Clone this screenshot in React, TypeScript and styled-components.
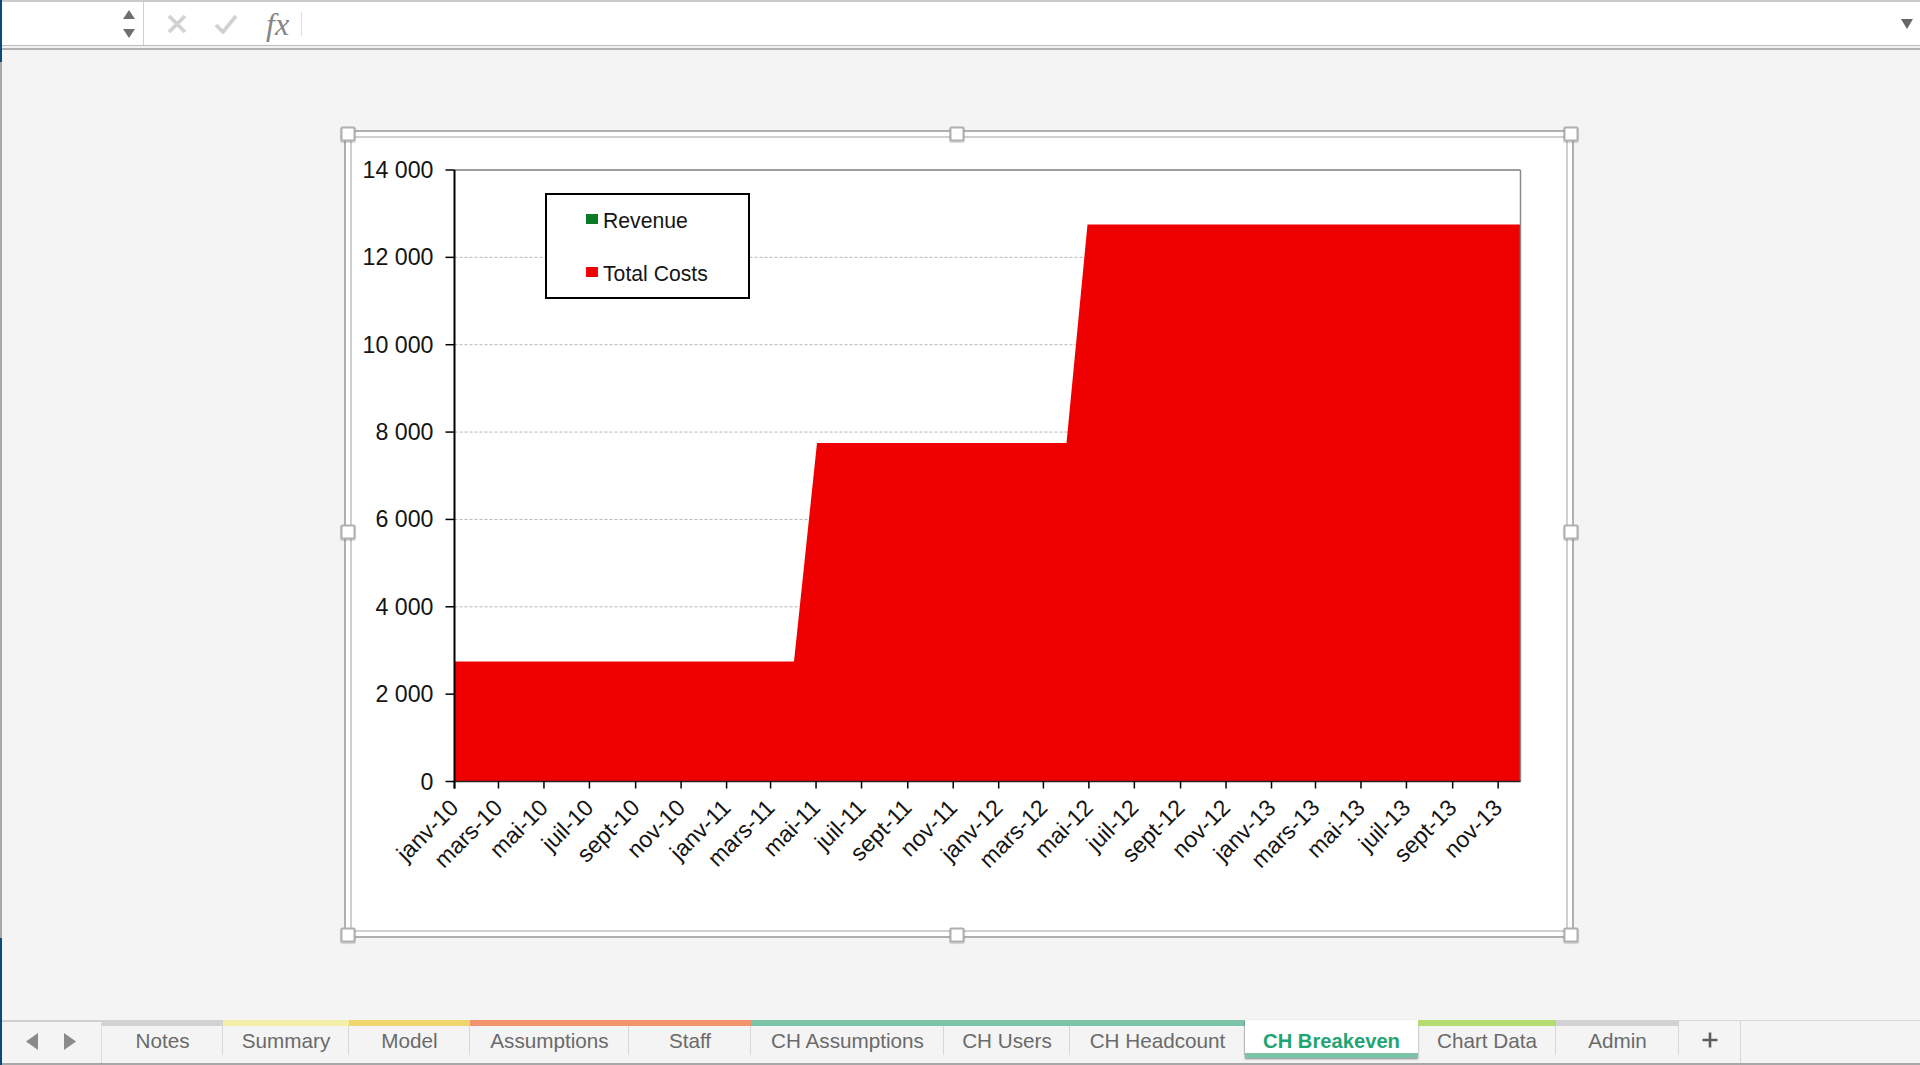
import React from 'react'
import styled, { createGlobalStyle } from 'styled-components'

/* chart scale, in page pixels because the svg viewBox starts at the frame's inner corner */
const PLOT = { left: 454.5, right: 1520.5, top: 170, bottom: 781.5 }
const Y_STEP = (PLOT.bottom - PLOT.top) / 14000
const AXIS_DAYS = 1430

const MONTHS = [
  { name: 'janv', index: 0 },
  { name: 'mars', index: 2 },
  { name: 'mai', index: 4 },
  { name: 'juil', index: 6 },
  { name: 'sept', index: 8 },
  { name: 'nov', index: 10 },
]

const xTicks = [2010, 2011, 2012, 2013].flatMap((year) =>
  MONTHS.map((m) => {
    const days = (Date.UTC(year, m.index, 1) - Date.UTC(2010, 0, 1)) / 86400000
    return {
      label: `${m.name}-${String(year).slice(2)}`,
      x: PLOT.left + (days / AXIS_DAYS) * (PLOT.right - PLOT.left),
    }
  })
)

const yTicks = [0, 2000, 4000, 6000, 8000, 10000, 12000, 14000]

const yOf = (v: number): number => PLOT.bottom - v * Y_STEP
const formatY = (v: number): string => (v === 0 ? '0' : `${v / 1000} 000`)

const costArea = [
  [PLOT.left, yOf(0)],
  [PLOT.left, yOf(2750)],
  [794, yOf(2750)],
  [817, yOf(7750)],
  [1066.5, yOf(7750)],
  [1087.5, yOf(12750)],
  [PLOT.right, yOf(12750)],
  [PLOT.right, yOf(0)],
]
  .map((p) => p.join(','))
  .join(' ')

const TABS = [
  { label: 'Notes', width: 121, color: '#d2d2d2' },
  { label: 'Summary', width: 126, color: '#f3efa6' },
  { label: 'Model', width: 121, color: '#efd56e' },
  { label: 'Assumptions', width: 159, color: '#f2956e' },
  { label: 'Staff', width: 122, color: '#f2956e' },
  { label: 'CH Assumptions', width: 193, color: '#7cc3a7' },
  { label: 'CH Users', width: 126, color: '#7cc3a7' },
  { label: 'CH Headcount', width: 175, color: '#7cc3a7' },
  { label: 'CH Breakeven', width: 173, color: '#7cc3a7', active: true },
  { label: 'Chart Data', width: 138, color: '#b5dc6e' },
  { label: 'Admin', width: 123, color: '#d2d2d2' },
]

const HANDLES = [
  { x: 0, y: 0 },
  { x: 49.8, y: 0 },
  { x: 100, y: 0 },
  { x: 0, y: 49.8 },
  { x: 100, y: 49.8 },
  { x: 0, y: 100 },
  { x: 49.8, y: 100 },
  { x: 100, y: 100 },
]

const GlobalStyle = createGlobalStyle`
  html, body {
    margin: 0;
    padding: 0;
    background: #f4f4f4;
    font-family: "Liberation Sans", Arial, sans-serif;
  }
`

const Window = styled.div`
  display: flex;
  width: 1920px;
  height: 1065px;
  overflow: hidden;
`

const EdgeStrip = styled.div`
  flex: 0 0 2px;
  background: linear-gradient(#0d4a78 62px, #a8a8a8 62px, #a8a8a8 938px, #0d4a78 938px);
`

const Main = styled.div`
  flex: 1;
  display: flex;
  flex-direction: column;
  min-width: 0;
`

const Toolbar = styled.div`
  display: flex;
  align-items: center;
  height: 46px;
  box-sizing: border-box;
  background: #fff;
  border-top: 2px solid #cbcbcb;
  border-bottom: 1.5px solid #bcbcbc;
`

const ToolbarRule = styled.div`
  height: 4px;
  box-sizing: border-box;
  background: #f2f2f2;
  border-bottom: 2px solid #b2b2b2;
`

const NameBox = styled.div`
  flex: 0 0 142px;
  box-sizing: border-box;
  align-self: stretch;
  display: flex;
  flex-direction: column;
  align-items: flex-end;
  justify-content: center;
  gap: 10px;
  padding-right: 8px;
  border-right: 1.5px solid #cfcfcf;
`

const ToolIcon = styled.svg`
  display: block;
  flex: none;
`

const FormulaActions = styled.div`
  display: flex;
  align-items: center;
  padding-left: 23px;
  gap: 27px;
`

const FxLabel = styled.span`
  margin-left: 1px;
  font-family: "Liberation Serif", "Times New Roman", serif;
  font-style: italic;
  font-size: 32px;
  line-height: 30px;
  color: #858585;
`

const FormulaDivider = styled.div`
  width: 1px;
  height: 24px;
  margin-left: -15px;
  background: #dcdcdc;
`

const FormulaInput = styled.div`
  flex: 1;
  display: flex;
  justify-content: flex-end;
  padding-right: 7px;
`

const SheetArea = styled.div`
  flex: 1;
  padding: 80px 0 0 342px;
  background: #f4f4f4;
`

const ChartFrame = styled.div`
  position: relative;
  box-sizing: border-box;
  width: 1230px;
  height: 808px;
  padding: 4px;
  background: #fff;
  border: 2px solid #b0b0b0;
`

const ChartInner = styled.div`
  position: relative;
  box-sizing: border-box;
  height: 100%;
  border: 2px solid #cfcfcf;
`

const ChartSvg = styled.svg`
  display: block;
  width: 100%;
  height: 100%;
`

const AxisLabel = styled.text`
  font-family: "Liberation Sans", Arial, sans-serif;
  font-size: 23.2px;
  fill: #141414;
`

const Legend = styled.div`
  position: absolute;
  left: 193px;
  top: 55px;
  box-sizing: border-box;
  width: 205px;
  height: 106px;
  display: flex;
  flex-direction: column;
  justify-content: center;
  gap: 29px;
  padding: 2px 0 0 39px;
  background: #fff;
  border: 2px solid #000;
`

const LegendRow = styled.div`
  display: flex;
  align-items: center;
  height: 24px;
  font-size: 21.2px;
  color: #151515;
`

const LegendSwatch = styled.span<{ $color: string }>`
  width: 12px;
  height: 10px;
  margin: -3px 5px 0 0;
  background: ${(p) => p.$color};
`

const HandleLayer = styled.div`
  position: absolute;
  inset: 1.5px;
  pointer-events: none;
`

const Handle = styled.span<{ $x: number; $y: number }>`
  position: absolute;
  left: ${(p) => p.$x}%;
  top: ${(p) => p.$y}%;
  width: 15px;
  height: 15px;
  box-sizing: border-box;
  transform: translate(-50%, -50%);
  background: #fff;
  border: 2px solid #b0b0b0;
  border-radius: 2px;
  box-shadow: 0 1px 1px rgba(0, 0, 0, 0.15);
`

const TabBar = styled.div`
  display: flex;
  height: 45px;
  box-sizing: border-box;
  background: #f4f4f4;
  border-bottom: 2px solid #a8a8a8;
`

const TabNav = styled.div`
  flex: 0 0 100px;
  box-sizing: border-box;
  display: flex;
  align-items: center;
  gap: 26px;
  padding: 0 0 2px 24px;
  border-top: 2px solid #cfcfcf;
  border-right: 1px solid #dcdcdc;
`

const Tab = styled.div<{ $width: number; $color: string; $active?: boolean }>`
  position: relative;
  flex: 0 0 ${(p) => p.$width}px;
  box-sizing: border-box;
  display: flex;
  align-items: center;
  justify-content: center;
  white-space: nowrap;
  ${(p) =>
    p.$active
      ? `
    height: 38px;
    padding-top: 9px;
    background: #fff;
    border-bottom: 5px solid ${p.$color};
    box-shadow: 0 1px 2px rgba(0, 0, 0, 0.45);
    color: #1fa574;
    font-size: 20.2px;
    font-weight: 700;
  `
      : `
    padding-bottom: 7px;
    border-top: 6px solid ${p.$color};
    color: #6a6a6a;
    font-size: 20.7px;
    &::after {
      content: '';
      position: absolute;
      right: 0;
      top: 0;
      bottom: 8px;
      width: 1px;
      background: #d8d8d8;
    }
  `}
`

const AddTab = styled.div`
  flex: 0 0 62px;
  box-sizing: border-box;
  display: flex;
  align-items: center;
  justify-content: center;
  padding: 0 0 5px 0;
  border-top: 1.5px solid #d6d6d6;
  border-right: 1px solid #d8d8d8;
`

const TabFiller = styled.div`
  flex: 1;
  border-top: 1.5px solid #d6d6d6;
`

const Chart = () => (
  <ChartSvg viewBox="352 138 1214 792">
    {yTicks
      .filter((v) => v > 0 && v < 14000)
      .map((v) => (
        <line key={v} x1={PLOT.left} x2={PLOT.right} y1={yOf(v)} y2={yOf(v)} stroke="#b5b5b5" strokeWidth="1" strokeDasharray="3 2" />
      ))}
    <polygon points={costArea} fill="#ee0000" />
    <line x1={PLOT.left} x2={PLOT.right} y1={PLOT.top} y2={PLOT.top} stroke="#7d7d7d" strokeWidth="1.5" />
    <line x1={PLOT.right} x2={PLOT.right} y1={PLOT.top} y2={PLOT.bottom} stroke="#8a8a8a" strokeWidth="1.5" />
    <line x1={PLOT.left} x2={PLOT.left} y1={PLOT.top} y2={PLOT.bottom + 7} stroke="#000" strokeWidth="2" />
    <line x1={PLOT.left} x2={PLOT.right} y1={PLOT.bottom} y2={PLOT.bottom} stroke="#222" strokeWidth="1.5" />
    {yTicks.map((v) => (
      <g key={v}>
        <line x1={PLOT.left - 9} x2={PLOT.left} y1={yOf(v)} y2={yOf(v)} stroke="#000" strokeWidth="1.5" />
        <AxisLabel x={433.5} y={yOf(v) + 8} textAnchor="end">
          {formatY(v)}
        </AxisLabel>
      </g>
    ))}
    {xTicks.map((t) => (
      <g key={t.label}>
        <line x1={t.x} x2={t.x} y1={PLOT.bottom} y2={PLOT.bottom + 7} stroke="#000" strokeWidth="1.5" />
        <AxisLabel x={t.x + 5.5} y={PLOT.bottom + 27.5} textAnchor="end" transform={`rotate(-45 ${t.x + 5.5} ${PLOT.bottom + 27.5})`}>
          {t.label}
        </AxisLabel>
      </g>
    ))}
  </ChartSvg>
)

export default function App() {
  return (
    <Window>
      <GlobalStyle />
      <EdgeStrip />
      <Main>
        <Toolbar>
          <NameBox>
            <ToolIcon width="12" height="9" viewBox="0 0 12 9">
              <path d="M6 0 L12 9 L0 9 Z" fill="#6e6e6e" />
            </ToolIcon>
            <ToolIcon width="12" height="9" viewBox="0 0 12 9">
              <path d="M0 0 L12 0 L6 9 Z" fill="#6e6e6e" />
            </ToolIcon>
          </NameBox>
          <FormulaActions>
            <ToolIcon width="20" height="20" viewBox="0 0 20 20">
              <path d="M2 2 L18 18 M18 2 L2 18" stroke="#d2d2d2" strokeWidth="3.8" fill="none" />
            </ToolIcon>
            <ToolIcon width="24" height="20" viewBox="0 0 24 20">
              <path d="M2 11 L9 18 L22 2" stroke="#d2d2d2" strokeWidth="3.8" fill="none" />
            </ToolIcon>
            <FxLabel>fx</FxLabel>
            <FormulaDivider />
          </FormulaActions>
          <FormulaInput>
            <ToolIcon width="12" height="10" viewBox="0 0 12 10">
              <path d="M0 0 L12 0 L6 10 Z" fill="#666" />
            </ToolIcon>
          </FormulaInput>
        </Toolbar>
        <ToolbarRule />
        <SheetArea>
          <ChartFrame>
            <ChartInner>
              <Chart />
              <Legend>
                <LegendRow>
                  <LegendSwatch $color="#0b7a26" />
                  Revenue
                </LegendRow>
                <LegendRow>
                  <LegendSwatch $color="#ee0000" />
                  Total Costs
                </LegendRow>
              </Legend>
            </ChartInner>
            <HandleLayer>
              {HANDLES.map((h) => (
                <Handle key={`${h.x}-${h.y}`} $x={h.x} $y={h.y} />
              ))}
            </HandleLayer>
          </ChartFrame>
        </SheetArea>
        <TabBar>
          <TabNav>
            <ToolIcon width="12" height="17" viewBox="0 0 12 17">
              <path d="M12 0 L12 17 L0 8.5 Z" fill="#8a8a8a" />
            </ToolIcon>
            <ToolIcon width="12" height="17" viewBox="0 0 12 17">
              <path d="M0 0 L12 8.5 L0 17 Z" fill="#8a8a8a" />
            </ToolIcon>
          </TabNav>
          {TABS.map((t) => (
            <Tab key={t.label} $width={t.width} $color={t.color} $active={t.active}>
              {t.label}
            </Tab>
          ))}
          <AddTab>
            <ToolIcon width="18" height="18" viewBox="0 0 18 18">
              <path d="M9 1.5 V16.5 M1.5 9 H16.5" stroke="#5e5e5e" strokeWidth="2.6" fill="none" />
            </ToolIcon>
          </AddTab>
          <TabFiller />
        </TabBar>
      </Main>
    </Window>
  )
}
